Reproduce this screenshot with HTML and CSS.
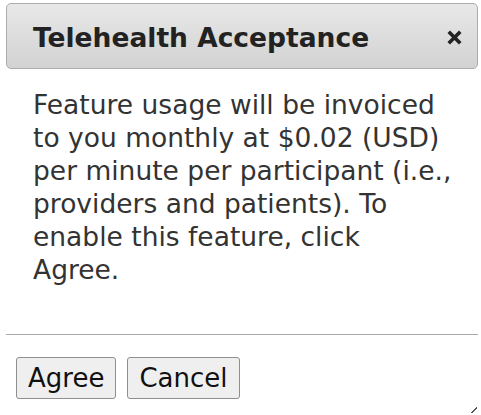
FILE: index.html
```html
<!DOCTYPE html>
<html>
<head>
<meta charset="utf-8">
<link rel="stylesheet" href="styles.css">
</head>
<body>
<div class="dialog">
  <div class="titlebar">
    <span class="title">Telehealth Acceptance</span>
    <button class="close" aria-label="close">
      <svg width="15" height="15" viewBox="0 0 15 15"><path d="M3 3 L12 12 M12 3 L3 12" stroke="#222" stroke-width="3.6" stroke-linecap="square"/></svg>
    </button>
  </div>
  <div class="content">
    <p class="message">Feature usage will be invoiced to you monthly at $0.02 (USD) per minute per participant (i.e., providers and patients). To enable this feature, click<br>Agree.</p>
  </div>
  <div class="buttonpane">
    <button class="btn">Agree</button>
    <button class="btn">Cancel</button>
  </div>
  <div class="resize"></div>
</div>
</body>
</html>
```
FILE: styles.css
```css
html, body {
  margin: 0;
  padding: 0;
  background: #fff;
}
body {
  font-family: "DejaVu Sans", Verdana, sans-serif;
  overflow: hidden;
  height: 415px;
}
.dialog {
  position: relative;
  padding: 3px 3px 0 6px;
  height: 412px;
}
.titlebar {
  display: flex;
  align-items: center;
  justify-content: space-between;
  border: 1px solid #acacac;
  border-radius: 5px;
  background: linear-gradient(#e8e8e8, #d2d2d2);
  padding: 2px 15px 0 26px;
  box-sizing: border-box;
  height: 66px;
}
.title {
  font-weight: bold;
  font-size: 26.5px;
  color: #222;
}
.close {
  border: none;
  background: transparent;
  padding: 0;
  width: 15px;
  height: 15px;
  display: flex;
}
.content {
  padding: 19px 16px 0 27px;
  height: 246px;
  border-bottom: 1px solid #aaa;
}
.message {
  margin: 0;
  font-size: 26.5px;
  line-height: 33px;
  color: #333;
}
.buttonpane {
  display: flex;
  gap: 11px;
  padding: 22px 0 0 10px;
}
.btn {
  font-family: "DejaVu Sans", Verdana, sans-serif;
  font-size: 26px;
  color: #111;
  background: #efefef;
  border: 1px solid #8f8f8f;
  border-radius: 3px;
  height: 42px;
  padding: 0 11px;
}
.resize {
  position: absolute;
  right: 4px;
  bottom: 2px;
  width: 6px;
  height: 6px;
  background: linear-gradient(135deg, transparent 42%, #555 45%, #555 60%, transparent 63%);
}
```
